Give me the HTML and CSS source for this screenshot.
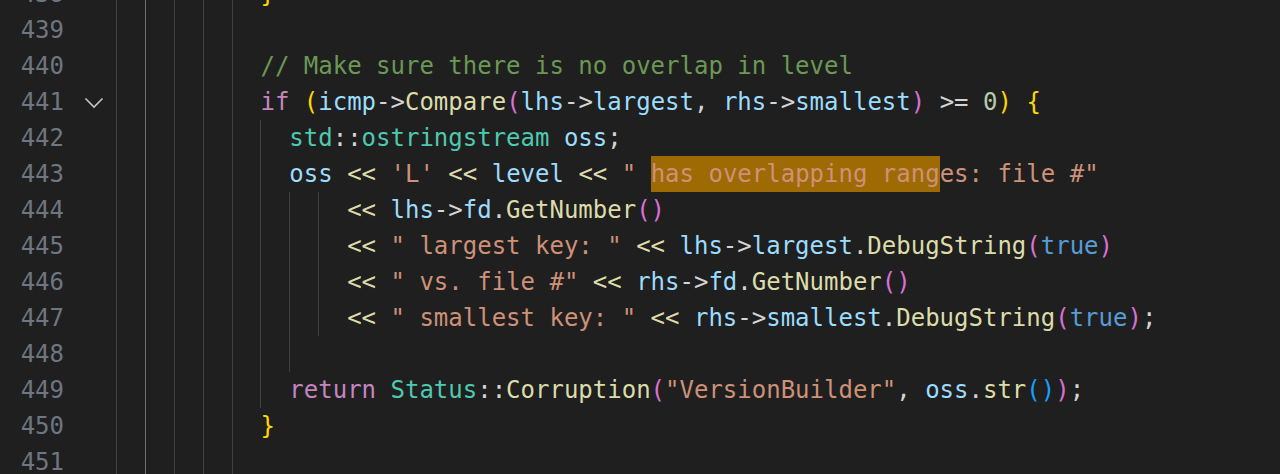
FILE: index.html
```html
<!DOCTYPE html>
<html lang="en">
<head>
<meta charset="utf-8">
<title>Editor</title>
<link rel="stylesheet" href="styles.css">
</head>
<body>
<div class="editor">
  <div class="ln"><span class="num">438</span><span class="fold"></span><div class="code"><span class="g"></span><span class="g ga"></span><span class="g"></span><span class="g"></span><span class="g"></span><span class="t"><span class="b1">}</span></span></div></div>
  <div class="ln"><span class="num">439</span><span class="fold"></span><div class="code"><span class="g"></span><span class="g ga"></span><span class="g"></span><span class="g"></span><span class="g"></span><span class="t"> </span></div></div>
  <div class="ln"><span class="num">440</span><span class="fold"></span><div class="code"><span class="g"></span><span class="g ga"></span><span class="g"></span><span class="g"></span><span class="g"></span><span class="t"><span class="c">// Make sure there is no overlap in level</span></span></div></div>
  <div class="ln"><span class="num">441</span><span class="fold"><svg class="chev" width="20" height="12" viewBox="0 0 20 12"><path d="M1.5 1.5 L10 10 L18.5 1.5" fill="none" stroke="#c5c5c5" stroke-width="1.6"/></svg></span><div class="code"><span class="g"></span><span class="g ga"></span><span class="g"></span><span class="g"></span><span class="g"></span><span class="t"><span class="k">if</span> <span class="b1">(</span><span class="v">icmp</span>-&gt;<span class="f">Compare</span><span class="b2">(</span><span class="v">lhs</span>-&gt;<span class="v">largest</span>, <span class="v">rhs</span>-&gt;<span class="v">smallest</span><span class="b2">)</span> &gt;= <span class="n">0</span><span class="b1">)</span> <span class="b1">{</span></span></div></div>
  <div class="ln"><span class="num">442</span><span class="fold"></span><div class="code"><span class="g"></span><span class="g ga"></span><span class="g"></span><span class="g"></span><span class="g"></span><span class="g"></span><span class="t"><span class="ty">std</span>::<span class="ty">ostringstream</span> <span class="v">oss</span>;</span></div></div>
  <div class="ln"><span class="num">443</span><span class="fold"></span><div class="code"><span class="g"></span><span class="g ga"></span><span class="g"></span><span class="g"></span><span class="g"></span><span class="g"></span><span class="t"><span class="v">oss</span> <span class="f">&lt;&lt;</span> <span class="s">'L'</span> <span class="f">&lt;&lt;</span> <span class="v">level</span> <span class="f">&lt;&lt;</span> <span class="s">" <span class="hl">has overlapping rang</span>es: file #"</span></span></div></div>
  <div class="ln"><span class="num">444</span><span class="fold"></span><div class="code"><span class="g"></span><span class="g ga"></span><span class="g"></span><span class="g"></span><span class="g"></span><span class="g"></span><span class="g"></span><span class="g"></span><span class="t"><span class="f">&lt;&lt;</span> <span class="v">lhs</span>-&gt;<span class="v">fd</span>.<span class="f">GetNumber</span><span class="b2">()</span></span></div></div>
  <div class="ln"><span class="num">445</span><span class="fold"></span><div class="code"><span class="g"></span><span class="g ga"></span><span class="g"></span><span class="g"></span><span class="g"></span><span class="g"></span><span class="g"></span><span class="g"></span><span class="t"><span class="f">&lt;&lt;</span> <span class="s">" largest key: "</span> <span class="f">&lt;&lt;</span> <span class="v">lhs</span>-&gt;<span class="v">largest</span>.<span class="f">DebugString</span><span class="b2">(</span><span class="bo">true</span><span class="b2">)</span></span></div></div>
  <div class="ln"><span class="num">446</span><span class="fold"></span><div class="code"><span class="g"></span><span class="g ga"></span><span class="g"></span><span class="g"></span><span class="g"></span><span class="g"></span><span class="g"></span><span class="g"></span><span class="t"><span class="f">&lt;&lt;</span> <span class="s">" vs. file #"</span> <span class="f">&lt;&lt;</span> <span class="v">rhs</span>-&gt;<span class="v">fd</span>.<span class="f">GetNumber</span><span class="b2">()</span></span></div></div>
  <div class="ln"><span class="num">447</span><span class="fold"></span><div class="code"><span class="g"></span><span class="g ga"></span><span class="g"></span><span class="g"></span><span class="g"></span><span class="g"></span><span class="g"></span><span class="g"></span><span class="t"><span class="f">&lt;&lt;</span> <span class="s">" smallest key: "</span> <span class="f">&lt;&lt;</span> <span class="v">rhs</span>-&gt;<span class="v">smallest</span>.<span class="f">DebugString</span><span class="b2">(</span><span class="bo">true</span><span class="b2">)</span>;</span></div></div>
  <div class="ln"><span class="num">448</span><span class="fold"></span><div class="code"><span class="g"></span><span class="g ga"></span><span class="g"></span><span class="g"></span><span class="g"></span><span class="g"></span><span class="g"></span><span class="t"> </span></div></div>
  <div class="ln"><span class="num">449</span><span class="fold"></span><div class="code"><span class="g"></span><span class="g ga"></span><span class="g"></span><span class="g"></span><span class="g"></span><span class="g"></span><span class="t"><span class="k">return</span> <span class="ty">Status</span>::<span class="f">Corruption</span><span class="b2">(</span><span class="s">"VersionBuilder"</span>, <span class="v">oss</span>.<span class="f">str</span><span class="b3">()</span><span class="b2">)</span>;</span></div></div>
  <div class="ln"><span class="num">450</span><span class="fold"></span><div class="code"><span class="g"></span><span class="g ga"></span><span class="g"></span><span class="g"></span><span class="g"></span><span class="t"><span class="b1">}</span></span></div></div>
  <div class="ln"><span class="num">451</span><span class="fold"></span><div class="code"><span class="g"></span><span class="g ga"></span><span class="g"></span><span class="g"></span><span class="g"></span><span class="t"> </span></div></div>
</div>
</body>
</html>
```
FILE: styles.css
```css
html, body {
  margin: 0;
  padding: 0;
  background: #1f1f1f;
  height: 100%;
  overflow: hidden;
}
.editor {
  margin-top: -24px;
  font-family: "DejaVu Sans Mono", "Liberation Mono", monospace;
  font-size: 24px;
  color: #d4d4d4;
}
.ln {
  display: flex;
  height: 36px;
  line-height: 36px;
}
.num {
  width: 64px;
  text-align: right;
  color: #6e7681;
  flex: none;
}
.fold {
  width: 52px;
  flex: none;
  display: flex;
  align-items: center;
}
.chev {
  margin-left: 20px;
  margin-top: 1px;
}
.code {
  display: flex;
  flex: 1;
}
.g {
  width: 2ch;
  flex: none;
  height: 36px;
  box-shadow: inset 1px 0 0 #404040;
}
.g.ga {
  box-shadow: inset 1px 0 0 #707070;
}
.t {
  white-space: pre;
}
.c { color: #6a9955; }
.k { color: #c586c0; }
.v { color: #9cdcfe; }
.f { color: #dcdcaa; }
.ty { color: #4ec9b0; }
.s { color: #ce9178; }
.n { color: #b5cea8; }
.bo { color: #569cd6; }
.b1 { color: #ffd700; }
.b2 { color: #da70d6; }
.b3 { color: #179fff; }
.hl {
  background: #9e6a03;
  display: inline-block;
  height: 36px;
  vertical-align: top;
}
```
